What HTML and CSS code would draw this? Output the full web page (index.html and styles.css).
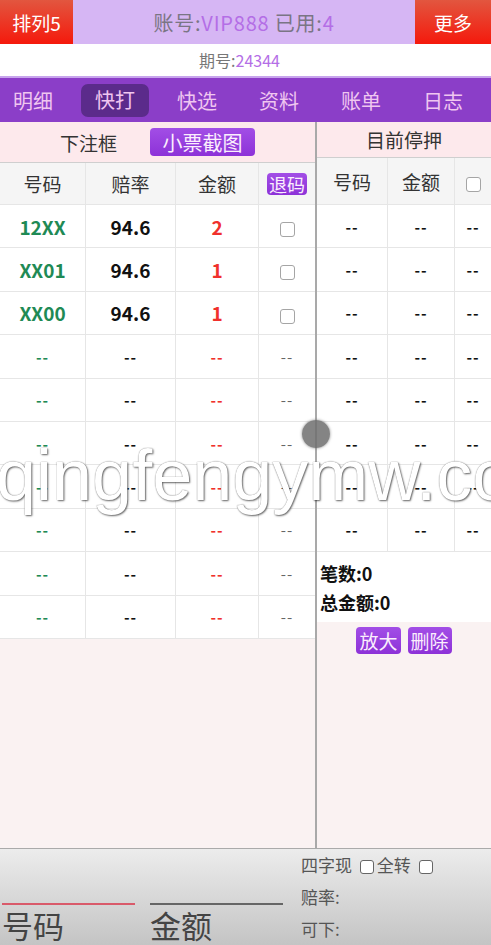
FILE: index.html
```html
<!DOCTYPE html>
<html lang="zh-CN">
<head>
    <meta charset="UTF-8">
    <meta name="viewport" content="width=device-width, initial-scale=1.0">
    <title>快打</title>
    <link rel="stylesheet" href="styles.css">
</head>
<body>
    <div class="app">
        <div class="topbar">
            <div class="red-btn">排列5</div>
            <div class="account">账号:<span class="hl">VIP888</span>&nbsp;已用:<span class="hl">4</span></div>
            <div class="red-btn more">更多</div>
        </div>
        <div class="period">期号:<span class="hl">24344</span></div>
        <div class="nav">
            <div class="nav-item">明细</div>
            <div class="nav-item active"><span>快打</span></div>
            <div class="nav-item">快选</div>
            <div class="nav-item">资料</div>
            <div class="nav-item">账单</div>
            <div class="nav-item">日志</div>
        </div>

        <div class="main">
            <div class="left">
                <div class="panel-head">
                    <span class="title">下注框</span>
                    <span class="btn-purple big">小票截图</span>
                </div>
                <table class="grid bets">
                    <tr class="head">
                        <td>号码</td><td>赔率</td><td>金额</td><td><span class="btn-purple small">退码</span></td>
                    </tr>
                    <tr><td class="num">12XX</td><td class="odds">94.6</td><td class="amt">2</td><td><span class="box"></span></td></tr>
                    <tr><td class="num">XX01</td><td class="odds">94.6</td><td class="amt">1</td><td><span class="box"></span></td></tr>
                    <tr><td class="num">XX00</td><td class="odds">94.6</td><td class="amt">1</td><td><span class="box"></span></td></tr>
                    <tr><td class="num dash">--</td><td class="odds dash">--</td><td class="amt dash">--</td><td class="dash grey">--</td></tr>
                    <tr><td class="num dash">--</td><td class="odds dash">--</td><td class="amt dash">--</td><td class="dash grey">--</td></tr>
                    <tr><td class="num dash">--</td><td class="odds dash">--</td><td class="amt dash">--</td><td class="dash grey">--</td></tr>
                    <tr><td class="num dash">--</td><td class="odds dash">--</td><td class="amt dash">--</td><td class="dash grey">--</td></tr>
                    <tr><td class="num dash">--</td><td class="odds dash">--</td><td class="amt dash">--</td><td class="dash grey">--</td></tr>
                    <tr><td class="num dash">--</td><td class="odds dash">--</td><td class="amt dash">--</td><td class="dash grey">--</td></tr>
                    <tr><td class="num dash">--</td><td class="odds dash">--</td><td class="amt dash">--</td><td class="dash grey">--</td></tr>
                </table>
            </div>

            <div class="right">
                <div class="panel-head small-head">
                    <span class="title">目前停押</span>
                </div>
                <table class="grid stops">
                    <tr class="head">
                        <td>号码</td><td>金额</td><td><span class="box"></span></td>
                    </tr>
                    <tr><td class="dash">--</td><td class="dash">--</td><td class="dash">--</td></tr>
                    <tr><td class="dash">--</td><td class="dash">--</td><td class="dash">--</td></tr>
                    <tr><td class="dash">--</td><td class="dash">--</td><td class="dash">--</td></tr>
                    <tr><td class="dash">--</td><td class="dash">--</td><td class="dash">--</td></tr>
                    <tr><td class="dash">--</td><td class="dash">--</td><td class="dash">--</td></tr>
                    <tr><td class="dash">--</td><td class="dash">--</td><td class="dash">--</td></tr>
                    <tr><td class="dash">--</td><td class="dash">--</td><td class="dash">--</td></tr>
                    <tr><td class="dash">--</td><td class="dash">--</td><td class="dash">--</td></tr>
                </table>
                <div class="summary">
                    <div>笔数:0</div>
                    <div>总金额:0</div>
                </div>
                <div class="actions">
                    <span class="btn-purple">放大</span>
                    <span class="btn-purple">删除</span>
                </div>
            </div>
        </div>

        <div class="bottom">
            <div class="field active">号码</div>
            <div class="field">金额</div>
            <div class="info">
                <div>四字现 <span class="box"></span>全转 <span class="box"></span></div>
                <div>赔率:</div>
                <div>可下:</div>
            </div>
        </div>

        <div class="watermark">qingfengymw.co</div>
        <div class="touch"></div>
    </div>
</body>
</html>
```

FILE: styles.css
```css
body {
    margin: 0;
    font-family: "Noto Sans CJK SC", "Liberation Sans", sans-serif;
    background-color: #fff;
}
.app {
    position: relative;
    width: 491px;
    height: 945px;
    overflow: hidden;
    display: flex;
    flex-direction: column;
}
.hl {
    color: #b46ee6;
}

/* top bar */
.topbar {
    display: flex;
    height: 44px;
    background-color: #d6b6f4;
}
.red-btn {
    width: 73px;
    display: flex;
    align-items: center;
    justify-content: center;
    color: #fff;
    font-size: 19px;
    background: linear-gradient(#e2563f, #f5190c);
}
.red-btn.more {
    width: 76px;
}
.account {
    flex: 1;
    display: flex;
    align-items: center;
    justify-content: center;
    font-size: 20px;
    letter-spacing: 0.8px;
    color: #7a7584;
}
.period {
    height: 32px;
    display: flex;
    align-items: center;
    justify-content: center;
    padding-right: 12px;
    font-size: 16px;
    color: #777;
    border-bottom: 2px solid #c7a4ec;
}

/* nav */
.nav {
    display: flex;
    height: 44px;
    background-color: #8b3ec8;
}
.nav-item {
    flex: 0 0 82px;
    display: flex;
    align-items: center;
    justify-content: center;
    color: #f0c6f0;
    font-size: 20px;
}
.nav-item:first-child {
    margin-left: -8px;
}
.nav-item.active span {
    background-color: #5b2b8b;
    border-radius: 7px;
    padding: 1px 14px 3px;
}

/* main area */
.main {
    flex: 1;
    display: flex;
    background-color: #faf2f2;
}
.left {
    width: 315px;
    border-right: 2px solid #a9a9a9;
}
.right {
    flex: 1;
    display: flex;
    flex-direction: column;
}
.panel-head {
    height: 40px;
    display: flex;
    align-items: center;
    justify-content: center;
    gap: 33px;
    background-color: #fde9ec;
    border-bottom: 1px solid #cfcfcf;
    font-size: 19px;
    color: #333;
}
.small-head {
    height: 35px;
}
.btn-purple {
    display: inline-flex;
    align-items: center;
    justify-content: center;
    background: linear-gradient(#a24ee6, #8d32d8);
    color: #fbeefd;
    border-radius: 4px;
    font-size: 19px;
    padding: 0 3px;
    height: 27px;
}
.btn-purple.big {
    width: 99px;
    height: 28px;
    font-size: 20px;
}
.btn-purple.small {
    height: 22px;
    padding: 0 2px;
    font-size: 18px;
}

/* tables */
.grid {
    width: 100%;
    border-collapse: collapse;
    background-color: #fff;
    table-layout: fixed;
}
.grid td {
    border: 1px solid #e6e6e6;
    text-align: center;
    height: 42.4px;
    padding: 0;
    font-weight: bold;
    font-size: 19px;
    color: #111;
}
.grid tr:first-child td {
    border-top: none;
}
.grid td:first-child {
    border-left: none;
}
.grid td:last-child {
    border-right: none;
}
.grid .head td {
    background-color: #f5f5f5;
    font-weight: normal;
    color: #333;
    height: 41px;
}
.bets td:nth-child(1) { width: 85px; }
.bets td:nth-child(2) { width: 89px; }
.bets td:nth-child(3) { width: 82px; }
.stops td:nth-child(1) { width: 70px; }
.stops td:nth-child(2) { width: 66px; }
.stops td {
    height: 42.4px;
}
.stops .head td {
    height: 46px;
}
.grid .num {
    color: #1f8a55;
}
.grid .amt {
    color: #f0302c;
}
.grid .dash {
    font-size: 15px;
    letter-spacing: 1px;
}
.grid .grey {
    color: #666;
    font-weight: normal;
}
.box {
    display: inline-block;
    width: 13px;
    height: 13px;
    border: 1.5px solid #a5a5a5;
    border-radius: 3px;
    background-color: #fff;
    vertical-align: middle;
}

/* right summary */
.summary {
    background-color: #fff;
    height: 70px;
    padding: 7px 0 0 3px;
    box-sizing: border-box;
    font-weight: bold;
    font-size: 18px;
    line-height: 29px;
    color: #111;
}
.actions {
    display: flex;
    justify-content: center;
    gap: 7px;
    padding-top: 5px;
}

/* bottom bar */
.bottom {
    height: 97px;
    display: flex;
    background: linear-gradient(#ececec, #c4c4c4);
    border-top: 1px solid #aaa;
    box-sizing: border-box;
}
.field {
    width: 133px;
    margin: 54px 13px 0 2px;
    border-top: 2px solid #666;
    font-size: 31px;
    color: #444;
    line-height: 40px;
}
.field.active {
    border-top-color: #d95a6a;
}
.info {
    margin-left: 5px;
    padding-top: 0;
    font-size: 17px;
    color: #555;
    line-height: 32px;
}
.info .box {
    width: 12px;
    height: 12px;
    border-color: #666;
    margin: 0 3px 0 4px;
}

/* overlays */
.watermark {
    position: absolute;
    left: -4px;
    top: 434px;
    font-family: "Liberation Sans", sans-serif;
    font-size: 72px;
    color: #fff;
    white-space: nowrap;
    text-shadow: 0 0 1px #666, 1px 1px 2px rgba(0, 0, 0, 0.6);
    pointer-events: none;
}
.touch {
    position: absolute;
    left: 302px;
    top: 420px;
    width: 28px;
    height: 28px;
    border-radius: 50%;
    background-color: rgba(110, 110, 110, 0.85);
    box-shadow: 0 0 3px rgba(110, 110, 110, 0.8);
}
```
